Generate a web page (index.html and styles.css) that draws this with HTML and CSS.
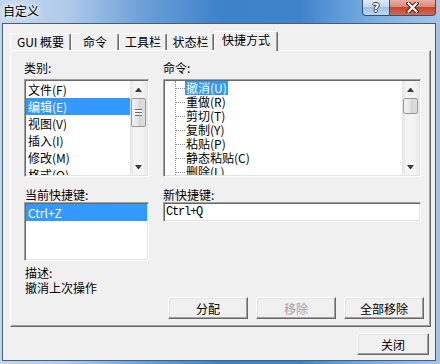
FILE: index.html
```html
<!DOCTYPE html>
<html>
<head>
    <title>自定义</title>
    <link rel="stylesheet" href="styles.css">
</head>
<body>
<div class="window">
    <div class="titlebar">
        <span class="title">自定义</span>
        <div class="caption">
            <div class="cap-btn help"><span>?</span></div>
            <div class="cap-btn close">
                <svg width="13" height="11" viewBox="0 0 13 11">
                    <path d="M2.5 1.5 L10.5 9.5 M10.5 1.5 L2.5 9.5" stroke="#4a2018" stroke-width="4.2" stroke-linecap="square"/>
                    <path d="M2.5 1.5 L10.5 9.5 M10.5 1.5 L2.5 9.5" stroke="#fff" stroke-width="2.2" stroke-linecap="square"/>
                </svg>
            </div>
        </div>
    </div>

    <div class="client">
        <div class="tabs">
            <div class="tab tab-gui">GUI 概要</div>
            <div class="tab tab-cmd">命令</div>
            <div class="tab tab-tool">工具栏</div>
            <div class="tab tab-status">状态栏</div>
            <div class="tab tab-keys active">快捷方式</div>
        </div>

        <div class="panel">
            <div class="pair labels">
                <span>类别:</span>
                <span>命令:</span>
            </div>

            <div class="pair boxes">
                <div class="listbox cat-box">
                    <div class="items">
                        <div class="item">文件(F)</div>
                        <div class="item selected">编辑(E)</div>
                        <div class="item">视图(V)</div>
                        <div class="item">插入(I)</div>
                        <div class="item">修改(M)</div>
                        <div class="item">格式(O)</div>
                    </div>
                    <div class="vscroll">
                        <div class="arrow up"></div>
                        <div class="thumb"><div class="grip"></div></div>
                        <div class="track"></div>
                        <div class="arrow down"></div>
                    </div>
                </div>

                <div class="listbox cmd-box">
                    <div class="tree">
                        <ul class="branch">
                            <li><span class="dash"></span><span class="node selected">撤消(U)</span></li>
                            <li><span class="dash"></span><span class="node">重做(R)</span></li>
                            <li><span class="dash"></span><span class="node">剪切(T)</span></li>
                            <li><span class="dash"></span><span class="node">复制(Y)</span></li>
                            <li><span class="dash"></span><span class="node">粘贴(P)</span></li>
                            <li><span class="dash"></span><span class="node">静态粘贴(C)</span></li>
                            <li><span class="dash"></span><span class="node">删除(L)</span></li>
                        </ul>
                    </div>
                    <div class="vscroll">
                        <div class="arrow up"></div>
                        <div class="thumb small"></div>
                        <div class="track"></div>
                        <div class="arrow down"></div>
                    </div>
                </div>
            </div>

            <div class="pair labels second">
                <span>当前快捷键:</span>
                <span>新快捷键:</span>
            </div>

            <div class="pair boxes">
                <div class="listbox keys-box">
                    <div class="items">
                        <div class="item selected">Ctrl+Z</div>
                    </div>
                </div>
                <div class="textbox">Ctrl+Q</div>
            </div>

            <div class="desc">
                <div>描述:</div>
                <div>撤消上次操作</div>
            </div>

            <div class="actions">
                <button class="btn">分配</button>
                <button class="btn" disabled>移除</button>
                <button class="btn">全部移除</button>
            </div>
        </div>

        <div class="footer">
            <button class="btn btn-close">关闭</button>
        </div>
    </div>
</div>
</body>
</html>
```

FILE: styles.css
```css
* {
    box-sizing: border-box;
}
html, body {
    margin: 0;
    padding: 0;
}
body {
    width: 440px;
    height: 364px;
    overflow: hidden;
    font-family: "Noto Sans CJK SC", "Noto Sans", sans-serif;
    font-size: 12px;
    color: #000;
}
.window {
    width: 440px;
    height: 364px;
    display: flex;
    flex-direction: column;
    padding: 0 4px 3px 2px;
    background: linear-gradient(90deg, #c2d6ec 0%, #b0cbe9 15%, #6a9fd8 33%, #3e82ca 50%, #3f83cb 68%, #78ace1 84%, #a3c6ea 100%);
}

/* title bar */
.titlebar {
    height: 23px;
    display: flex;
    justify-content: space-between;
    align-items: flex-start;
}
.title {
    padding-left: 1px;
    line-height: 21px;
    text-shadow: 0 0 5px #fff, 0 0 9px #fff, 0 0 12px rgba(255, 255, 255, 0.9);
}
.caption {
    display: flex;
}
.cap-btn {
    height: 16px;
    border: 1px solid #3b4e68;
    border-top: none;
    display: flex;
    align-items: center;
    justify-content: center;
}
.help {
    width: 28px;
    border-radius: 0 0 0 4px;
    background: linear-gradient(#dfeaf7, #c3d8f0 45%, #a2c0e4 50%, #bcd5f0);
}
.help span {
    color: #fff;
    font-family: "DejaVu Sans", sans-serif;
    font-weight: bold;
    font-size: 12px;
    line-height: 14px;
    text-shadow: 1px 0 #2b3b52, -1px 0 #2b3b52, 0 1px #2b3b52, 0 -1px #2b3b52;
}
.close {
    width: 46px;
    border-left: none;
    border-radius: 0 0 4px 0;
    background: linear-gradient(#e8b0a3, #d88a78 45%, #c8442c 50%, #d46a52);
}
.close svg {
    display: block;
}

/* client area */
.client {
    flex: 1;
    display: flex;
    flex-direction: column;
    padding: 7px 4px 0 7px;
    background-color: #f0f0f0;
    border: 1px solid #4b5d73;
}
.tabs {
    height: 19px;
    display: flex;
    align-items: flex-end;
    position: relative;
    z-index: 1;
}
.tab {
    height: 17px;
    line-height: 15px;
    text-align: center;
    background-color: #f0f0f0;
    border: 1px solid;
    border-color: #fff #696969 transparent #fff;
    border-bottom: none;
    border-radius: 2px 2px 0 0;
    box-shadow: inset -1px 0 #a0a0a0;
}
.tab.active {
    height: 20px;
    margin-bottom: -1px;
    line-height: 16px;
}
.tab-gui { width: 61px; }
.tab-cmd { width: 48px; }
.tab-tool { width: 48px; }
.tab-status { width: 47px; }
.tab-keys { width: 64px; }

.panel {
    height: 277px;
    display: flex;
    flex-direction: column;
    padding: 10px 0 0 13px;
    border: 1px solid;
    border-color: #fff #696969 #696969 #fff;
    box-shadow: inset -1px -1px #a0a0a0;
}
.pair {
    display: grid;
    grid-template-columns: 125px 258px;
    column-gap: 14px;
    align-items: start;
}
.labels {
    height: 14px;
    line-height: 14px;
    margin-bottom: 4px;
}
.labels.second {
    margin-top: 11px;
    margin-bottom: 0;
}
.labels.second span:first-child {
    padding-left: 1px;
}

/* sunken boxes */
.listbox, .textbox {
    background-color: #fff;
    border: 1px solid;
    border-color: #a0a0a0 #fff #fff #a0a0a0;
    box-shadow: inset 1px 1px #696969, inset -1px -1px #e3e3e3;
    padding: 1px;
    display: flex;
}
.cat-box, .cmd-box {
    height: 98px;
    overflow: hidden;
}
.keys-box {
    height: 59px;
}
.items {
    flex: 1;
    overflow: hidden;
}
.item {
    height: 17px;
    line-height: 17px;
    padding-left: 2px;
    white-space: nowrap;
}
.item.selected {
    background-color: #3399ff;
    color: #fff;
}

/* tree */
.tree {
    flex: 1;
    overflow: hidden;
}
.branch {
    list-style: none;
    margin: 0 0 0 10px;
    padding: 0;
    border-left: 1px dotted #8a8a8a;
}
.branch li {
    height: 14px;
    display: flex;
    align-items: center;
}
.dash {
    width: 9px;
    border-top: 1px dotted #8a8a8a;
}
.node {
    height: 14px;
    line-height: 14px;
    padding: 0 1px 0 1px;
    white-space: nowrap;
}
.node.selected {
    background-color: #3399ff;
    color: #fff;
    outline: 1px dotted #c8701e;
    outline-offset: -1px;
}

/* scrollbars */
.vscroll {
    width: 17px;
    display: flex;
    flex-direction: column;
    background: linear-gradient(90deg, #e4e4e4, #f4f4f4 25%, #f4f4f4 75%, #e8e8e8);
}
.arrow {
    height: 17px;
    display: flex;
    align-items: center;
    justify-content: center;
}
.arrow::before {
    content: "";
    width: 1px;
    border-left: 3px solid transparent;
    border-right: 3px solid transparent;
}
.arrow.up::before {
    border-bottom: 4px solid #3c3c3c;
}
.arrow.down::before {
    border-top: 4px solid #3c3c3c;
}
.thumb {
    height: 29px;
    margin: 0 1px;
    border: 1px solid #979797;
    border-radius: 2px;
    background: linear-gradient(90deg, #f2f2f2, #e6e6e6 45%, #d6d6d6 55%, #dedede);
    display: flex;
    align-items: center;
    justify-content: center;
}
.thumb.small {
    height: 16px;
}
.grip {
    width: 7px;
    height: 7px;
    background: repeating-linear-gradient(#6f6f6f 0, #6f6f6f 1px, #f4f4f4 1px, #f4f4f4 3px);
}
.track {
    flex: 1;
}

/* text field */
.textbox {
    height: 20px;
    padding: 1px 2px;
    font-family: "Liberation Mono", "DejaVu Sans Mono", monospace;
    font-size: 12px;
    letter-spacing: -1.2px;
    line-height: 16px;
}

.desc {
    margin-top: 4px;
    padding-left: 1px;
    line-height: 15px;
}

/* buttons */
.btn {
    height: 22px;
    width: 80px;
    padding: 0;
    font-family: inherit;
    font-size: 12px;
    color: #000;
    background-color: #f0f0f0;
    border: 1px solid;
    border-color: #fff #696969 #696969 #fff;
    box-shadow: inset -1px -1px #a0a0a0, inset 1px 1px #e3e3e3;
    border-radius: 0;
}
.btn:disabled {
    color: #a0a0a0;
}
.actions {
    margin-top: 2px;
    margin-right: 6px;
    display: flex;
    justify-content: flex-end;
    gap: 8px;
}
.footer {
    margin-top: 6px;
    display: flex;
    justify-content: flex-end;
    padding-right: 2px;
}
.btn-close {
    width: 72px;
}
```
